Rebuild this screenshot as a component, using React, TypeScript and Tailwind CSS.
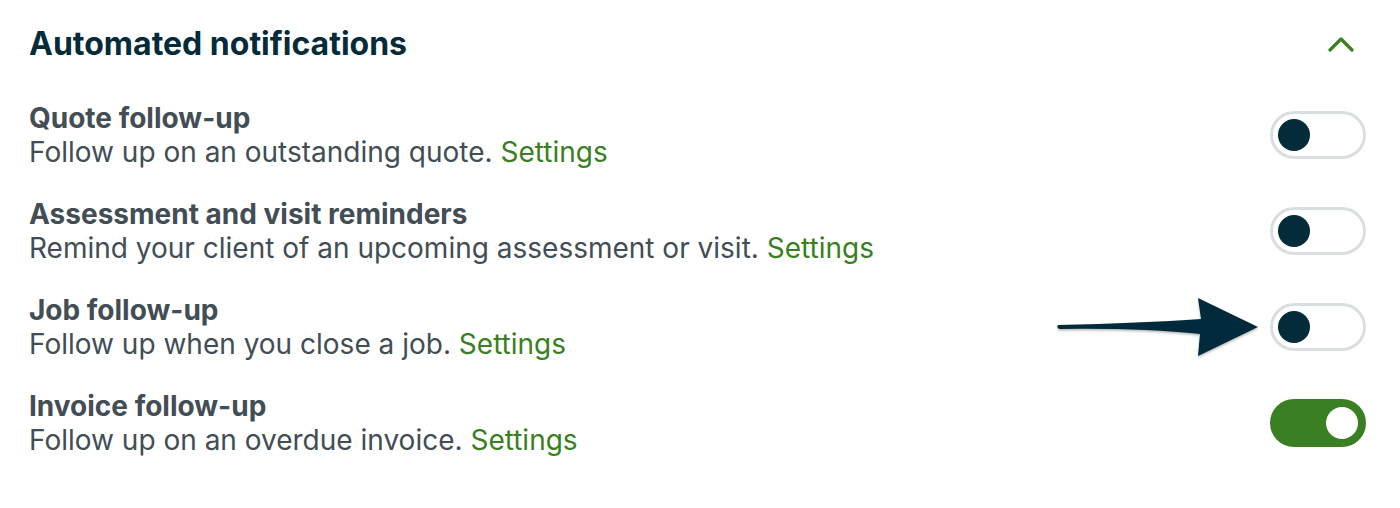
import { useState } from "react"

type Item = {
  title: string
  description: string
  enabled: boolean
}

const initialItems: Item[] = [
  { title: "Quote follow-up", description: "Follow up on an outstanding quote.", enabled: false },
  {
    title: "Assessment and visit reminders",
    description: "Remind your client of an upcoming assessment or visit.",
    enabled: false,
  },
  { title: "Job follow-up", description: "Follow up when you close a job.", enabled: false },
  { title: "Invoice follow-up", description: "Follow up on an overdue invoice.", enabled: true },
]

function Toggle({ on, onClick }: { on: boolean; onClick: () => void }) {
  return (
    <button
      onClick={onClick}
      className={
        on
          ? "flex h-[48px] w-[96px] items-center justify-end rounded-full border-[3px] border-[#3a7f21] bg-[#3a7f21] px-[5px]"
          : "flex h-[48px] w-[96px] items-center justify-start rounded-full border-[3px] border-[#d9dfe1] bg-white px-[5px]"
      }
      aria-pressed={on}
    >
      <span className={on ? "h-[32px] w-[32px] rounded-full bg-white" : "h-[32px] w-[32px] rounded-full bg-[#032b3a]"} />
    </button>
  )
}

export default function App() {
  const [items, setItems] = useState(initialItems)

  const toggle = (i: number) => {
    setItems(items.map((item, idx) => (idx === i ? { ...item, enabled: !item.enabled } : item)))
  }

  return (
    <div className="relative h-[508px] w-[1400px] bg-white font-['Inter',sans-serif]">
      <div className="flex flex-col pl-[29px] pr-[34px] pt-[27px]">
        {/* Header */}
        <div className="flex h-[34px] items-center justify-between">
          <h2 className="text-[32px] font-bold leading-[34px] text-[#032b3a]">Automated notifications</h2>
          <svg width="26" height="16" viewBox="0 0 26 16" className="mr-[12px]">
            <path d="M2 14 L13 3 L24 14" fill="none" stroke="#3a7f21" strokeWidth="3.2" strokeLinecap="round" strokeLinejoin="round" />
          </svg>
        </div>

        <div className="mt-[40px] flex flex-col gap-[28px]">
          {items.map((item, i) => (
            <div key={item.title} className="flex items-center justify-between">
              <div className="flex flex-col">
                <div className="text-[28px] font-bold leading-[34px] text-[#424d55]">{item.title}</div>
                <div className="text-[28px] leading-[34px] text-[#424d55]">
                  {item.description} <a className="text-[#3a7f21]">Settings</a>
                </div>
              </div>
              <Toggle on={item.enabled} onClick={() => toggle(i)} />
            </div>
          ))}
        </div>
      </div>

      {/* annotation arrow */}
      <svg className="absolute left-[1052px] top-[294px]" width="212" height="66" viewBox="0 0 212 66">
        <defs>
          <filter id="sh" x="-10%" y="-20%" width="130%" height="150%">
            <feDropShadow dx="0" dy="1.5" stdDeviation="1.2" floodColor="#000" floodOpacity="0.3" />
          </filter>
        </defs>
        <path
          d="M6 31 Q4 34 8 35 Q90 34 148 40 L146 62 L206 33 L146 4 L149 25 Q90 29 6 31 Z"
          fill="#032b3a"
          filter="url(#sh)"
        />
      </svg>
    </div>
  )
}
